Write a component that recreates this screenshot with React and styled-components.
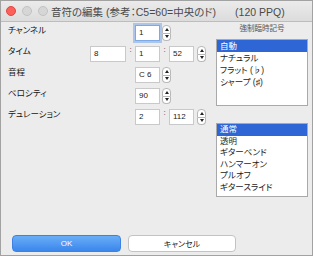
import React from "react";
import styled, { createGlobalStyle } from "styled-components";

const Global = createGlobalStyle`
  html, body { margin: 0; padding: 0; background: #ececec; }
  body { font-family: "Liberation Sans", "Noto Sans CJK JP", sans-serif; }
`;

const Window = styled.div`
  box-sizing: border-box;
  width: 313px;
  height: 256px;
  border: 1px solid #a2a2a2;
  background: #ececec;
  display: flex;
  flex-direction: column;
  overflow: hidden;
`;

const TitleBar = styled.div`
  height: 20px;
  flex: none;
  display: flex;
  align-items: center;
  padding-left: 5px;
  background: linear-gradient(#ebebeb, #dcdcdc);
  border-bottom: 1px solid #bdbdbd;
`;

const Lights = styled.div`
  display: flex;
  gap: 6px;
`;

const Light = styled.span`
  width: 10px;
  height: 10px;
  box-sizing: border-box;
  border-radius: 50%;
  background: ${(p) => (p.$red ? "#fc605b" : "#d6d6d6")};
  border: 1px solid ${(p) => (p.$red ? "#de4a43" : "#c2c2c2")};
`;

const Title = styled.div`
  margin-left: 3px;
  font-size: 10.5px;
  color: #4a4a4a;
  font-feature-settings: "palt";
  white-space: nowrap;
`;

const Ppq = styled.span`
  margin-left: 19px;
`;

const Body = styled.div`
  flex: 1;
  display: flex;
  flex-direction: column;
  padding: 0 4px 3px 7px;
`;

const Main = styled.div`
  display: flex;
  justify-content: space-between;
`;

const Form = styled.div`
  margin-top: 3px;
  display: grid;
  grid-template-columns: 82px 36px 9px 25px 9px 25px 3px 9px;
  grid-auto-rows: 16px;
  row-gap: 5px;
  align-items: start;
  font-size: 8px;
  color: #151515;
  font-feature-settings: "palt";
`;

const Label = styled.div`
  grid-column: 1;
  font-size: 8.5px;
  line-height: 9px;
  padding-top: 1px;
  white-space: nowrap;
`;

const Field = styled.div`
  grid-column: ${(p) => p.$col};
  box-sizing: border-box;
  height: 16px;
  background: #fff;
  border: 1px solid ${(p) => (p.$focus ? "#7ea8e6" : "#c9c9c9")};
  box-shadow: ${(p) => (p.$focus ? "0 0 0 2px rgba(120,165,235,0.55)" : "none")};
  padding-left: 3px;
  line-height: 14px;
  font-size: 8px;
  color: #222;
`;

const Colon = styled.div`
  grid-column: ${(p) => p.$col};
  justify-self: center;
  line-height: 8px;
  font-size: 8px;
  color: #444;
`;

const StepperBox = styled.div`
  grid-column: ${(p) => p.$col};
  margin-left: ${(p) => p.$shift || 0}px;
  width: 9px;
  height: 16px;
  display: flex;
  flex-direction: column;
`;

const StepHalf = styled.div`
  flex: 1;
  box-sizing: border-box;
  background: #fff;
  border: 1px solid #b8b8b8;
  border-radius: ${(p) => (p.$down ? "0 0 4px 4px" : "4px 4px 0 0")};
  ${(p) => (p.$down ? "border-top: none;" : "")}
  display: flex;
  align-items: center;
  justify-content: center;
`;

const Arrow = styled.span`
  width: 0;
  height: 0;
  border-left: 2.5px solid transparent;
  border-right: 2.5px solid transparent;
  ${(p) =>
    p.$down ? "border-top: 3px solid #222;" : "border-bottom: 3px solid #222;"}
`;

const Stepper = ({ col, shift }) => (
  <StepperBox $col={col} $shift={shift}>
    <StepHalf>
      <Arrow />
    </StepHalf>
    <StepHalf $down>
      <Arrow $down />
    </StepHalf>
  </StepperBox>
);

const Side = styled.div`
  width: 92px;
  display: flex;
  flex-direction: column;
  font-feature-settings: "palt";
`;

const SideLabel = styled.div`
  margin-top: 2px;
  font-size: 7.5px;
  line-height: 10px;
  color: #555;
  text-align: center;
`;

const List = styled.div`
  box-sizing: border-box;
  margin-top: ${(p) => p.$mt}px;
  height: ${(p) => p.$h}px;
  background: #fff;
  border: 1px solid #a9a9a9;
`;

const Item = styled.div`
  height: ${(p) => p.$rh}px;
  line-height: ${(p) => p.$rh}px;
  padding-left: 3px;
  font-size: 8.5px;
  white-space: nowrap;
  color: ${(p) => (p.$sel ? "#fff" : "#1c1c1c")};
  background: ${(p) => (p.$sel ? "#2f66d5" : "transparent")};
`;

const Buttons = styled.div`
  margin-top: auto;
  padding-left: 4px;
  display: flex;
  gap: 7px;
`;

const Button = styled.div`
  box-sizing: border-box;
  width: ${(p) => p.$w}px;
  height: 17px;
  border-radius: 4px;
  display: flex;
  align-items: center;
  justify-content: center;
  font-size: 8px;
  font-feature-settings: "palt";
  color: ${(p) => (p.$primary ? "#fff" : "#222")};
  background: ${(p) =>
    p.$primary ? "linear-gradient(#6aaef8, #3a86ec)" : "#fff"};
  border: 1px solid ${(p) => (p.$primary ? "#3d82e2" : "#c3c3c3")};
`;

const accidentals = ["自動", "ナチュラル", "フラット (♭)", "シャープ (♯)"];
const techniques = ["通常", "透明", "ギターベンド", "ハンマーオン", "プルオフ", "ギタースライド"];

export default function App() {
  return (
    <>
      <Global />
      <Window>
        <TitleBar>
          <Lights>
            <Light $red />
            <Light />
            <Light />
          </Lights>
          <Title>
            音符の編集 (参考：C5=60=中央のド)<Ppq>(120 PPQ)</Ppq>
          </Title>
        </TitleBar>
        <Body>
          <Main>
            <Form>
              <Label>チャンネル</Label>
              <Field $col={4} $focus>1</Field>
              <Stepper col={5} shift={2} />

              <Label>タイム</Label>
              <Field $col={2}>8</Field>
              <Colon $col={3}>:</Colon>
              <Field $col={4}>1</Field>
              <Colon $col={5}>:</Colon>
              <Field $col={6}>52</Field>
              <Stepper col={8} />

              <Label>音程</Label>
              <Field $col={4}>C 6</Field>
              <Stepper col={5} shift={2} />

              <Label>ベロシティ</Label>
              <Field $col={4}>90</Field>
              <Stepper col={5} shift={2} />

              <Label>デュレーション</Label>
              <Field $col={4}>2</Field>
              <Colon $col={5}>:</Colon>
              <Field $col={6}>112</Field>
              <Stepper col={8} />
            </Form>
            <Side>
              <SideLabel>強制臨時記号</SideLabel>
              <List $mt={5} $h={67}>
                {accidentals.map((t, i) => (
                  <Item key={t} $rh={12} $sel={i === 0}>
                    {t}
                  </Item>
                ))}
              </List>
              <List $mt={17} $h={74}>
                {techniques.map((t, i) => (
                  <Item key={t} $rh={11.5} $sel={i === 0}>
                    {t}
                  </Item>
                ))}
              </List>
            </Side>
          </Main>
          <Buttons>
            <Button $primary $w={109}>OK</Button>
            <Button $w={108}>キャンセル</Button>
          </Buttons>
        </Body>
      </Window>
    </>
  );
}
